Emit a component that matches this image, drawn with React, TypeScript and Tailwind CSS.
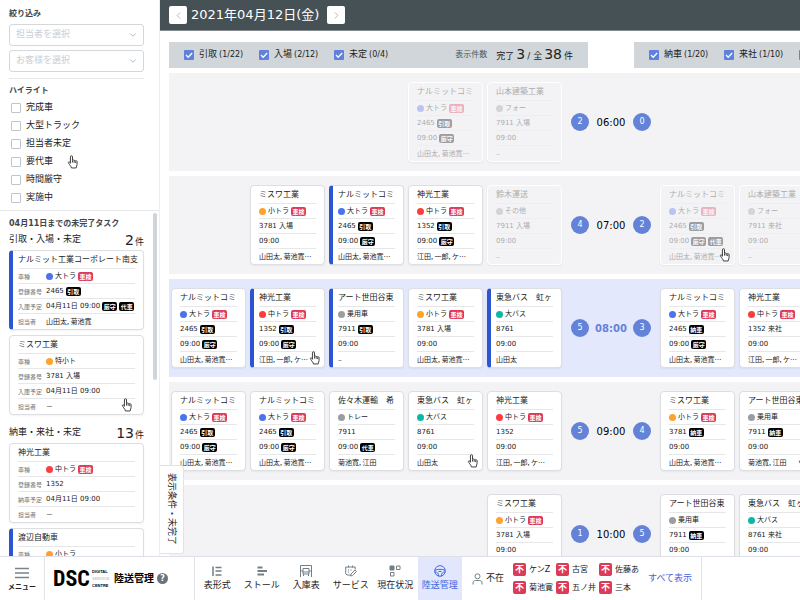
import type { ReactNode } from "react";
import { ChevronDown, ChevronLeft, ChevronRight } from "lucide-react";

type Color = "blue" | "red" | "orange" | "gray" | "teal";

type Task = {
  name: string;
  color: Color;
  type: string;
  inspect?: boolean;
  no: string;
  tag?: string;
  time: string;
  marks?: string[];
  staff?: string;
  done?: boolean;
  active?: boolean;
  hover?: boolean;
};

const dots: Record<Color, string> = {
  blue: "bg-[#4c72ee]",
  red: "bg-[#fb3d3f]",
  orange: "bg-[#ffa22e]",
  gray: "bg-[#9c9da1]",
  teal: "bg-[#0bb8a8]",
};

const narumi: Task = { name: "ナルミットコミ", color: "blue", type: "大トラ", inspect: true, no: "2465", tag: "引取", time: "09:00", marks: ["厳守"], staff: "山田太, 菊池寛…" };
const misuwa: Task = { name: "ミスワ工業", color: "orange", type: "小トラ", inspect: true, no: "3781 入場", time: "09:00", staff: "山田太, 菊池寛…" };
const shinko: Task = { name: "神光工業", color: "red", type: "中トラ", inspect: true, no: "1352", tag: "引取", time: "09:00", marks: ["厳守"], staff: "江田, 一郎, ケ…" };
const art: Task = { name: "アート世田谷東", color: "gray", type: "乗用車", no: "7911", tag: "引取", time: "09:00" };
const bus: Task = { name: "東急バス　虹ヶ", color: "teal", type: "大バス", no: "8761", time: "09:00", staff: "山田太" };
const yamamoto: Task = { name: "山本建築工業", color: "gray", type: "フォー", no: "7911 入場", time: "09:00", done: true };

const rows: { time: string; left: Task[]; right: Task[]; counts: [number, number]; now?: boolean }[] = [
  { time: "06:00", counts: [2, 0], left: [{ ...narumi, done: true }, yamamoto], right: [] },
  {
    time: "07:00",
    counts: [4, 2],
    left: [
      misuwa,
      { ...narumi, active: true },
      shinko,
      { ...yamamoto, name: "鈴木運送", type: "その他" },
    ],
    right: [
      { ...narumi, marks: ["厳守", "代車"], done: true, hover: true },
      { ...yamamoto, no: "7911 来社" },
    ],
  },
  {
    time: "08:00",
    counts: [5, 3],
    now: true,
    left: [
      narumi,
      { ...shinko, active: true, hover: true },
      { ...art, active: true },
      misuwa,
      { ...bus, active: true },
    ],
    right: [
      { ...narumi, tag: "納車" },
      { ...shinko, no: "1352 来社", tag: undefined, marks: [] },
    ],
  },
  {
    time: "09:00",
    counts: [5, 4],
    left: [
      narumi,
      narumi,
      { name: "佐々木運輸　希", color: "gray", type: "トレー", no: "7911", time: "09:00", marks: ["代車"], staff: "菊池寛, 江田" },
      { ...bus, hover: true },
      { ...shinko, tag: undefined, marks: [] },
    ],
    right: [
      { ...misuwa, no: "3781", tag: "納車" },
      { ...art, tag: "納車", staff: "菊池寛, 江田", hover: true },
    ],
  },
  {
    time: "10:00",
    counts: [1, 5],
    left: [misuwa],
    right: [
      { ...art, tag: "納車" },
      { ...bus, no: "8761 来社" },
    ],
  },
];

const incoming: Task[] = [
  { ...narumi, name: "ナルミット工業コーポレート南支", time: "04月11日 09:00", marks: ["厳守", "代車"], staff: "山田太, 菊池寛", active: true },
  { ...misuwa, type: "特小ト", inspect: false, time: "04月11日 09:00", staff: "－", hover: true },
];

const outgoing: Task[] = [
  { ...shinko, tag: undefined, time: "04月11日 09:00", marks: [], staff: "－" },
  { ...misuwa, name: "渡辺自動車", inspect: false, time: "04月11日 09:00", active: true },
];

function HandCursor() {
  return (
    <svg viewBox="0 0 21 27" className="h-[14px] w-[11px]" fill="#fff" stroke="#333" strokeWidth="1.8" strokeLinejoin="round">
      <path d="M6.5 16V3.500a2 2 0 0 1 4 0v7a1.700 1.700 0 0 1 3.200.5 1.700 1.700 0 0 1 3 .8 1.500 1.500 0 0 1 2.600 1.400v5.300c0 2-1.500 3.500-1.800 6.500H8.500c-.5-3-3-5-5-8.500-.8-1.400-1.300-2.600-.3-3.300s2.300.4 3.300 2.800z" />
      <path d="M10.500 11v3.500M13.700 11.500v3.500M16.600 12.500v3" fill="none" />
    </svg>
  );
}

function Badge({ red, children }: { red?: boolean; children: ReactNode }) {
  return (
    <span className={`h-[9px] w-[15px] shrink-0 rounded-[2px] text-center text-[6px] leading-[9px] font-bold text-white ${red ? "bg-[#dc3a56]" : "bg-black"}`}>
      {children}
    </span>
  );
}

function Line({ label, last, children }: { label?: string; last?: boolean; children: ReactNode }) {
  return (
    <div className={`flex h-[15px] items-center whitespace-nowrap ${last ? "" : "border-b border-[#e6e7e9]"}`}>
      {label && <span className="w-7 shrink-0 text-[6px] text-[#6d757b]">{label}</span>}
      <div className="flex items-center gap-[2px]">{children}</div>
    </div>
  );
}

function Card({ task, labels }: { task: Task; labels?: string[] }) {
  return (
    <article className={`relative shrink-0 text-[7px] text-[#222] ${labels ? "w-full" : "w-[75px]"}`}>
      <div
        className={`h-20 rounded-[4px] border pr-2 shadow-xs ${
          task.active ? "border-l-4 border-l-[#2c55d3] pl-[5px]" : "pl-2"
        } ${task.done ? "border-white" : "border-[#dcdee2] bg-white"}`}
      >
        <div className={task.done ? "opacity-35" : ""}>
          <h3 className="h-[18px] border-b border-[#e6e7e9] text-[8px] leading-[18px] whitespace-nowrap">{task.name}</h3>
          <Line label={labels?.[0]}>
            <i className={`size-[7px] rounded-full ${dots[task.color]}`} />
            {task.type}
            {task.inspect && <Badge red>車検</Badge>}
          </Line>
          <Line label={labels?.[1]}>
            {task.no}
            {task.tag && <Badge>{task.tag}</Badge>}
          </Line>
          <Line label={labels?.[2]}>
            {task.time}
            {task.marks?.map((mark) => <Badge key={mark}>{mark}</Badge>)}
          </Line>
          <Line label={labels?.[3]} last>
            <span className="font-['Noto_Sans_CJK_JP',sans-serif]">{task.staff ?? "–"}</span>
          </Line>
        </div>
      </div>
      {task.hover && (
        <span className={`absolute bottom-[3px] ${labels ? "right-3" : "right-[5px]"}`}>
          <HandCursor />
        </span>
      )}
    </article>
  );
}

function FilterSelect({ label }: { label: string }) {
  return (
    <div className="relative">
      <select aria-label={label} className="block h-[22px] w-full appearance-none rounded-[3px] border border-[#d3d8dd] bg-white px-[6px] text-[9px] text-[#c9ced3]">
        <option>{label}</option>
      </select>
      <ChevronDown className="pointer-events-none absolute top-[6px] right-[6px] size-[10px] text-[#a7afb6]" />
    </div>
  );
}

function CountCheck({ label, count }: { label: string; count: string }) {
  return (
    <label className="flex w-[75px] shrink-0 items-center whitespace-nowrap">
      <span className="mr-[5px] grid">
        <input type="checkbox" defaultChecked className="size-[10px] appearance-none rounded-[1px] bg-[#fff] checked:bg-[#5f80dc] [grid-area:1/1]" />
        <svg viewBox="0 0 10 10" className="pointer-events-none size-[10px] [grid-area:1/1]" fill="none" stroke="#fff" strokeWidth="1.3">
          <path d="M2 5l2.200 2.200L8.200 3" />
        </svg>
      </span>
      {label}
      <span className="ml-[2px] text-[8px]">({count})</span>
    </label>
  );
}

function TaskSection({ title, count, tasks, plan }: { title: string; count: number; tasks: Task[]; plan: string }) {
  return (
    <section className="mb-2">
      <div className="flex h-5 items-center justify-between text-[9px] text-[#222]">
        <h2>{title}</h2>
        <p className="flex items-baseline gap-px">
          <span className="text-[14px] leading-5">{count}</span>件
        </p>
      </div>
      <div className="flex flex-col gap-[5px]">
        {tasks.map((task) => (
          <Card key={task.name} task={task} labels={["車種", "登録番号", plan, "担当者"]} />
        ))}
      </div>
    </section>
  );
}

function Sidebar() {
  return (
    <aside className="flex w-40 shrink-0 flex-col border-r border-[#eceef0] text-[#3d474d]">
      <div className="border-b border-[#e4e6e9] px-[9px] pt-2 pb-[3px]">
        <div className="mr-[6px] border-b border-[#e4e6e9] pb-[6px]">
          <h2 className="mb-1 text-[8px] leading-3 font-bold">絞り込み</h2>
          <div className="flex flex-col gap-1">
            <FilterSelect label="担当者を選択" />
            <FilterSelect label="お客様を選択" />
          </div>
        </div>
        <h2 className="mt-[6px] mb-[2px] text-[8px] leading-3 font-bold">ハイライト</h2>
        {["完成車", "大型トラック", "担当者未定", "要代車", "時間厳守", "実施中"].map((label) => (
          <label key={label} className="flex h-[18px] items-center gap-[5px] pl-[2px] text-[9px] text-[#222]">
            <input type="checkbox" className="size-[10px] appearance-none rounded-[1px] border border-[#bfc5cb] checked:bg-[#5f80dc]" />
            {label}
            {label === "要代車" && (
              <span className="ml-[9px]">
                <HandCursor />
              </span>
            )}
          </label>
        ))}
      </div>
      <div className="relative min-h-0 flex-1 overflow-hidden pt-[7px] pr-[15px] pl-[9px]">
        <h2 className="text-[8px] leading-3 font-bold">04月11日までの未完了タスク</h2>
        <TaskSection title="引取・入場・未定" count={2} tasks={incoming} plan="入庫予定" />
        <TaskSection title="納車・来社・未定" count={13} tasks={outgoing} plan="納車予定" />
        <i className="absolute top-[2px] right-[2px] h-[167px] w-1 rounded-full bg-[#cfd4d9]" />
      </div>
    </aside>
  );
}

function CountDot({ children }: { children: ReactNode }) {
  return <span className="size-[18px] rounded-full bg-[#6482d8] text-center text-[8px] leading-[18px] text-white">{children}</span>;
}

function Board() {
  return (
    <main className="relative flex min-w-0 flex-1 flex-col">
      <header className="flex h-[31px] shrink-0 items-center gap-1 border-b border-[#858c90] bg-[#465156] px-[9px] text-[13px] text-white">
        <button aria-label="前の日" className="flex size-[18px] items-center justify-center rounded-[2px] bg-white text-[#aab4bb]">
          <ChevronLeft className="size-[11px]" />
        </button>
        <h1 className="pr-1 leading-4">2021年04月12日(金)</h1>
        <button aria-label="次の日" className="flex size-[18px] items-center justify-center rounded-[2px] bg-white text-[#aab4bb]">
          <ChevronRight className="size-[11px]" />
        </button>
      </header>
      <div className="min-h-0 flex-1 overflow-hidden pt-[11px] pl-[9px] text-[#222]">
        <div className="flex gap-[46px] text-[9px]">
          <div className="flex h-[26px] w-[419px] shrink-0 items-center bg-[#d1d6da] px-[15px]">
            <CountCheck label="引取" count="1/22" />
            <CountCheck label="入場" count="2/12" />
            <CountCheck label="未定" count="0/4" />
            <span className="ml-auto text-[8px] text-[#4d575d]">表示件数</span>
            <p className="ml-[9px] flex items-baseline gap-[2px] leading-5">
              完了<span className="text-[14px]">3</span>/ 全<span className="text-[14px]">38</span>件
            </p>
          </div>
          <div className="flex h-[26px] min-w-max flex-1 items-center bg-[#d1d6da] px-[15px]">
            <CountCheck label="納車" count="1/20" />
            <CountCheck label="来社" count="1/10" />
            <CountCheck label="未定" count="0/4" />
          </div>
        </div>
        <div className="mt-[5px] flex flex-col gap-[5px]">
          {rows.map((row) => (
            <section key={row.time} className={`flex h-[98px] min-w-max items-center ${row.now ? "bg-[#e4e8fd]" : "bg-[#f3f3f5]"}`}>
              <div className="flex w-[395px] justify-end gap-1 px-[2px]">
                {row.left.map((task, i) => (
                  <Card key={i} task={task} />
                ))}
              </div>
              <div className="flex w-24 items-center justify-between pr-[9px] pl-[7px]">
                <CountDot>{row.counts[0]}</CountDot>
                <time className={`text-[10px] ${row.now ? "font-bold text-[#6482d8]" : "text-black"}`}>{row.time}</time>
                <CountDot>{row.counts[1]}</CountDot>
              </div>
              <div className="flex gap-1">
                {row.right.map((task, i) => (
                  <Card key={i} task={task} />
                ))}
              </div>
            </section>
          ))}
        </div>
      </div>
      <button className="absolute bottom-[2px] left-0 flex h-[89px] w-6 items-center justify-center rounded-r-[3px] border border-l-0 border-[#e1e3e6] bg-white text-[9px] text-[#222] [writing-mode:vertical-rl]">
        <span className="[text-orientation:sideways]">表示条件・未完了</span>
      </button>
    </main>
  );
}

const tabs: { label: string; icon: ReactNode }[] = [
  { label: "表形式", icon: <path d="M2 1.500v9.500M4.500 2.500h6M4.500 6h6M4.500 10h6" strokeWidth="1.500" /> },
  { label: "ストール", icon: <path d="M1.500 2.500h5M1.500 6h9.500M1.500 9.500h6.500" strokeWidth="2" /> },
  {
    label: "入庫表",
    icon: (
      <>
        <path d="M.5 12V.5h11V12" />
        <path d="M3 3.500h6v5.500H3zM2 5v2M10 5v2M3 7h6M3.500 9v2M8.500 9v2" />
      </>
    ),
  },
  {
    label: "サービス",
    icon: (
      <>
        <path d="M5 10H2L.7 8.500V2h9.500v2.500M3.500.5v2M7.500.5v2M3 5h1M5.500 5h1M3 7h1" />
        <path d="M5.500 11l.5-2 4-4 1.500 1.500-4 4z" />
      </>
    ),
  },
  {
    label: "現在状況",
    icon: (
      <>
        <path d="M1 1h4v4H1z" fill="currentColor" />
        <path d="M7.500 1h3.500v3.500H7.500zM1.500 7.500H5V11H1.500z" />
      </>
    ),
  },
  {
    label: "陸送管理",
    icon: (
      <>
        <circle cx="6" cy="6" r="5.300" />
        <path d="M1 5.200c3-1.200 7-1.200 10 0M1 7c2.500 0 3.500 1.500 3.700 4M11 7c-2.500 0-3.500 1.500-3.700 4M4.500 6.500h3" />
      </>
    ),
  },
];

const absentees = ["ケンZ", "古宮", "佐藤あ", "菊池寛", "五ノ井", "三本"];

function BottomBar() {
  return (
    <footer className="flex h-11 shrink-0 border-t border-[#dfe0ec] bg-white text-[9px] text-[#222]">
      <button className="flex w-[45px] shrink-0 flex-col items-center gap-px border-r border-[#e1e3e6] pt-[8px] text-[7px] font-bold">
        <svg viewBox="0 0 16 16" className="size-4" stroke="#7b848a" strokeWidth="1.500">
          <path d="M1 3.500h14M1 8h14M1 12.500h14" />
        </svg>
        メニュー
      </button>
      <div className="flex w-[150px] shrink-0 items-center border-r border-[#e1e3e6] pl-2 text-black">
        <span className="w-9 font-['Roboto_Condensed','Open_Sans_Condensed','Liberation_Sans_Narrow',sans-serif] text-[22px] leading-6 font-bold">DSC</span>
        <span className="ml-[3px] flex w-5 flex-col font-['Liberation_Sans',sans-serif] text-[4px] leading-[7px] font-bold">
          <span>DIGITAL</span>
          <span className="text-[#c6cacd]">SERVICE</span>
          <span>CENTRE</span>
        </span>
        <span className="ml-[2px] text-[10px] font-bold whitespace-nowrap">陸送管理</span>
        <button aria-label="ヘルプ" className="ml-[3px] size-[11px] rounded-full bg-[#68757c] text-[8px] leading-[11px] font-bold text-white">
          ?
        </button>
      </div>
      <nav className="grid w-[267px] shrink-0 grid-cols-6">
        {tabs.map((tab) => (
          <a
            key={tab.label}
            href="#"
            className={`flex flex-col items-center gap-[2px] pt-[8px] leading-3 whitespace-nowrap ${tab.label === "陸送管理" ? "bg-[#e2e7fd] text-[#3f66e0]" : ""}`}
          >
            <svg
              viewBox="0 0 12 12"
              className={`size-3 ${tab.label === "陸送管理" ? "" : "text-[#737e85]"}`}
              fill="none"
              stroke="currentColor"
            >
              {tab.icon}
            </svg>
            {tab.label}
          </a>
        ))}
      </nav>
      <div className="flex shrink-0 items-center border-r border-[#e1e3e6] pr-[9px] pl-[10px]">
        <svg viewBox="0 0 11 12" className="h-3 w-[11px]" fill="none" stroke="#737e85">
          <circle cx="5.500" cy="3.300" r="2.500" />
          <path d="M1 11.500V10c0-1.700 1-2.500 2.500-2.500h4C9 7.500 10 8.300 10 10v1.500" />
        </svg>
        <span className="ml-[3px]">不在</span>
        <ul className="ml-[9px] grid grid-cols-3 gap-y-[5px] text-[8px]">
          {absentees.map((name) => (
            <li key={name} className="flex h-[13px] w-[43px] items-center gap-[3px] whitespace-nowrap">
              <span className="size-[13px] shrink-0 rounded-[2px] bg-[#dc3a56] text-center text-[9px] leading-[13px] font-bold text-white">不</span>
              {name}
            </li>
          ))}
        </ul>
        <a href="#" className="ml-[6px] text-[#3f66e0]">
          すべて表示
        </a>
      </div>
    </footer>
  );
}

export default function App() {
  return (
    <div lang="ja" className="flex h-screen flex-col overflow-hidden bg-white font-['DejaVu_Sans','Noto_Sans_CJK_JP',sans-serif]">
      <div className="flex min-h-0 flex-1">
        <Sidebar />
        <Board />
      </div>
      <BottomBar />
    </div>
  );
}
